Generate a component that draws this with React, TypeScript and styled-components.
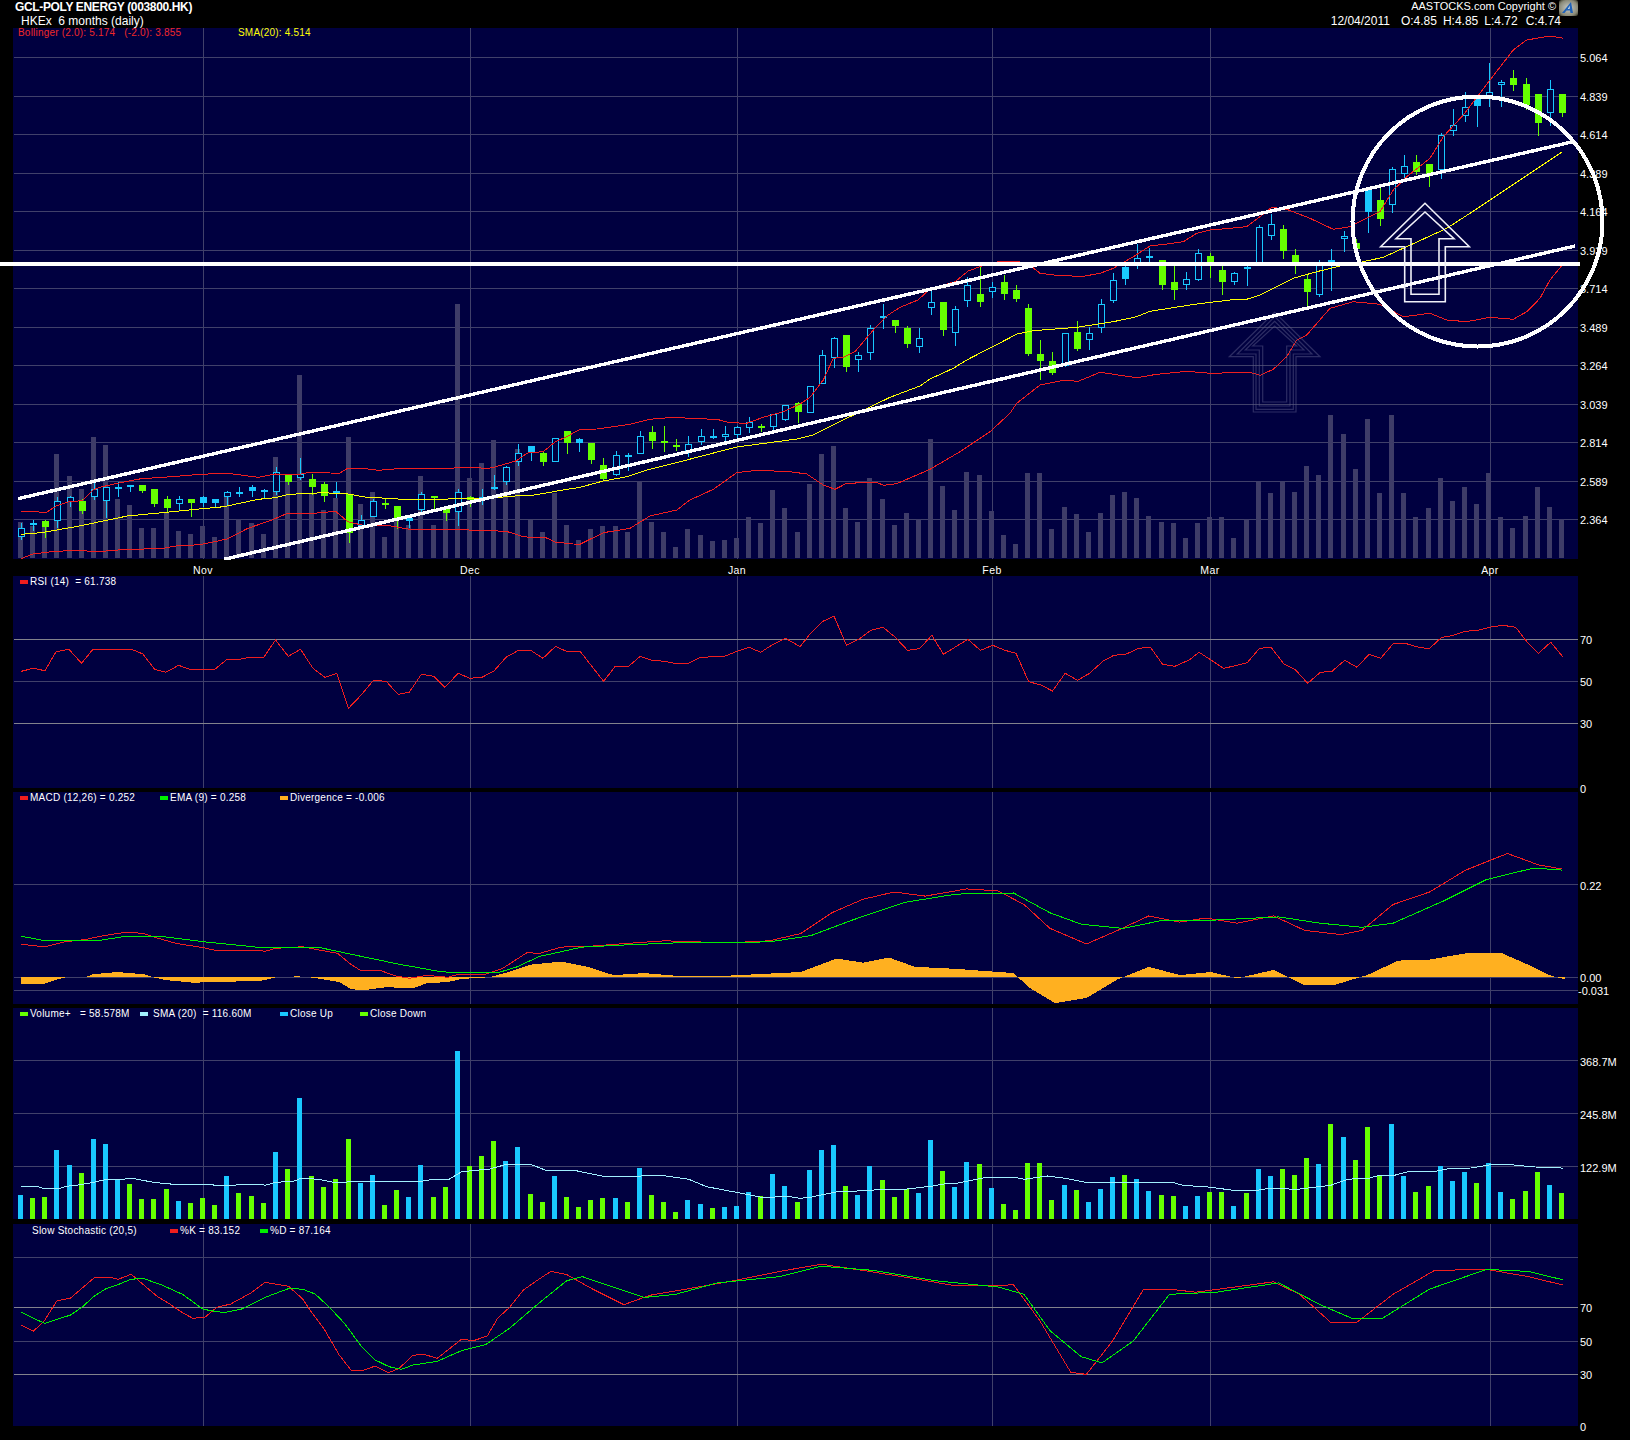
import React from "react";
import styled, { createGlobalStyle } from "styled-components";

const NAVY = "#000040";
const GRID = "#40406a";
const LIGHT = "#82828c";
const BLUE = "#19c8ff";
const GREEN = "#66ff00";
const RED = "#f01e1e";
const LIME = "#00f000";
const ORANGE = "#ffb020";
const YELLOW = "#ffff00";
const CYAN = "#a0f0ff";

// every value below was read off the chart in page pixels, from crops of different scale
const seg = (x0: number, y0: number, sx: number, sy: number, pts: string) =>
  pts.split(" ").map((p) => {
    const [x, y] = p.split(",").map(Number);
    return [x0 + x / sx, y0 + y / sy];
  });
const FULL = 1 / 1.0396;
const join = (...parts: number[][][]) =>
  parts.flat().map(([x, y]) => `${x.toFixed(1)},${y.toFixed(1)}`).join(" ");

const upperBand = join(
  seg(0, 400, 2.904, 3, "62,334 135,337 165,317 200,305 240,302 270,270 290,262 340,250 410,236 500,230 580,223 660,220 750,232 800,222 860,225 900,217 985,220 1010,205 1060,206 1100,211 1170,205 1310,205 1340,202 1420,205 1440,200 1500,182 1530,160"),
  seg(530, 300, 3, 3, "0,458 40,455 76,425 110,410 150,388 200,387 250,380 300,373 360,358 430,352 500,356 560,358 600,368 650,370 700,352 760,335 810,312 840,292 880,240 910,175 940,172 975,155 1030,90 1075,45 1110,22"),
  seg(900, 200, 3, 3, "54,300 90,267 165,245 205,213 245,198 300,184 355,184 395,200 420,220 480,227 550,229 600,220 640,205 700,170 750,138 800,132 850,125 890,100 930,90"),
  seg(1230, 0, 3, 3, "0,685 50,680 90,650 125,622 170,628 240,655 310,688 360,680 410,655 450,635 490,570 530,530 600,475 640,410 700,345 780,240 850,150 890,120 960,108 1000,115")
);
const lowerBand = join(
  seg(0, 400, 2.904, 3, "62,476 95,462 160,454 240,451 270,456 370,448 470,446 510,438 580,434 660,417 720,385 790,360 835,340 890,342 975,334 1010,365 1050,375 1130,377 1190,388 1300,388 1420,392 1470,394 1520,410"),
  seg(530, 300, 3, 3, "0,712 45,712 75,726 130,732 150,733 220,698 300,685 360,648 440,630 480,600 550,568 620,518 680,511 780,515 830,522 880,555 915,568 950,550 1040,547 1060,556 1100,551 1200,508 1290,455 1380,395 1440,340"),
  seg(900, 200, 3, 3, "350,610 420,555 490,541 535,544 600,517 710,533 770,523 860,514 930,520 1050,517 1080,526 1120,508 1160,470 1190,420 1220,405 1290,325 1360,305 1440,313"),
  seg(1230, 0, 3, 3, "520,950 600,940 650,960 710,965 780,952 850,958 890,935 930,895 960,840 997,795")
);
const sma = join(
  seg(0, 400, 2.904, 3, "62,403 120,398 165,390 230,378 300,363 370,348 470,338 570,328 650,320 750,298 800,293 840,283 940,278 1010,282 1060,291 1170,298 1300,297 1400,296 1450,292 1530,285"),
  seg(530, 300, 3, 3, "0,587 100,570 150,562 220,543 290,530 350,510 470,480 620,441 800,417 850,405 960,350 1080,292 1170,258 1200,237 1270,205 1310,180 1440,113"),
  seg(900, 200, 3, 3, "350,402 400,392 530,382 640,365 710,350 750,334 890,312"),
  seg(1230, 0, 3, 3, "0,900 50,898 90,885 190,835 260,815 330,798 400,785 460,772 530,740 650,685 720,640 780,600 900,520 960,480 997,455")
);
const rsi = join(
  seg(0, 590, 1.96, 3, "42,244 65,235 88,242 110,185 135,178 160,220 182,178 258,178 280,192 303,238 325,247 350,226 372,238 421,238 445,208 470,208 490,202 517,202 540,150 565,199 589,178 614,236 637,262 660,250 683,355 708,315 732,271 757,274 780,313 802,307 826,253 850,259 872,292 898,250 921,265 945,262 968,243 992,202 1016,181 1040,181 1064,205 1089,169 1110,184 1137,184 1183,274 1206,229 1232,229 1255,199 1278,211 1302,214 1323,220 1350,220 1373,202 1420,199 1445,184 1468,172 1491,187 1515,163 1540,145"),
  seg(800, 590, 1.889, 3, "0,170 20,130 42,95 64,78 88,166 111,148 134,121 157,112 180,142 203,181 226,176 249,136 271,193 317,148 341,181 364,166 387,181 408,190 432,275 455,285 477,303 501,250 524,271 547,250 572,214 593,196 615,193 640,175 662,172 685,223 708,229 735,210 754,187 800,235 820,228 845,218 868,175 890,172 914,222 935,238 959,280 983,247 1005,244 1029,211 1052,232 1075,193 1097,205 1120,162 1143,160 1165,170 1188,177 1212,142 1232,137 1256,124 1280,121 1306,111 1328,106 1352,112 1372,153 1395,190 1418,157 1441,200")
);
const macd = join(
  seg(0, 780, 2.904, 3, "62,493 115,499 135,499 190,485 245,479 300,467 365,457 415,460 450,472 510,490 590,503 625,511 750,511 770,514 800,505 880,500 915,508 980,520 1015,550 1045,570 1100,570 1150,588 1190,595 1240,586 1300,592 1330,583 1410,583 1460,565 1530,518"),
  seg(0, 0, FULL, FULL, "519,917 540,911 570,910 610,907 640,905 700,907 740,905 770,898 800,878 830,865 860,858 890,862 930,855 960,857 985,870 1010,893 1045,908 1075,895 1105,881 1135,887 1160,883 1190,888 1225,881 1255,895 1290,899 1310,895 1340,870 1375,858 1410,837 1450,821 1480,832 1503,836")
);
const ema = join(
  seg(0, 780, 2.904, 3, "62,469 125,481 290,481 365,469 465,469 590,485 750,502 925,502 1040,527 1160,553 1280,575 1310,577 1450,577 1500,561"),
  seg(0, 0, FULL, FULL, "519,920 560,911 600,909 650,907 740,906 780,900 820,885 870,868 920,860 975,859 1010,878 1040,889 1080,893 1120,885 1170,885 1230,882 1270,888 1310,892 1340,888 1390,866 1430,846 1475,835 1503,837")
);
const divergence = join(
  [[21, 977]],
  seg(0, 780, 2.904, 3, "62,611 128,611 160,600 190,592 200,590 212,590 213,592 245,592 270,583 340,576 420,583 445,592 480,600 560,608 640,606 760,602 800,592 868,589 880,592 900,592 950,600 985,606 1020,628 1060,630 1120,622 1200,624 1240,610 1300,606 1340,597 1400,593 1420,592 1470,578"),
  seg(0, 0, FULL, FULL, "510,928 540,925 565,930 590,938 620,936 650,938.5 700,938.5 770,935 805,922 830,926 855,921 880,930 920,932 975,936 990,950 1015,965 1045,960 1075,942 1105,930 1135,938 1165,935 1190,941 1225,933 1255,948 1285,947 1315,938 1345,924 1375,923 1410,917 1445,917 1470,928 1490,938 1505,942"),
  [[1565, 977]]
);
const volumeSma = join(
  seg(0, 1040, 1.96, 3, "41,439 72,439 85,445 118,445 130,439 150,436 180,428 210,418 240,418 260,415 300,427 340,433 415,433 420,436 460,436 470,433 510,433 520,436 540,427 575,424 590,415 625,418 650,426 680,426 700,424 825,424 850,418 880,418 905,395 960,387 990,374 1040,373 1070,391 1125,391 1180,408 1250,411 1260,406 1295,406 1350,418 1385,440 1440,456 1500,474 1520,471 1540,468"),
  seg(800, 1040, 1.96, 3, "0,475 20,472 70,456 140,451 160,447 210,447 260,438 285,431 310,429 365,412 420,412 440,418 485,408 520,415 560,427 730,427 750,436 800,441 860,453 900,450 920,445 975,448 1040,436 1070,420 1090,415 1115,415 1135,406 1165,406 1195,394 1245,394 1275,385 1315,384 1350,375 1385,373 1440,381 1480,382 1495,385")
);
const stochK = join(
  seg(0, 1200, 2.904, 3, "62,376 97,394 130,360 165,303 205,294 275,232 320,232 343,238 381,223 455,288 490,310 530,338 560,355 595,352 630,322 670,312 730,278 770,247 838,259 880,298 900,330 940,385 985,465 1020,511 1056,511 1090,498 1128,518 1160,505 1198,466 1230,463 1270,475 1340,418 1375,422 1415,408 1445,355 1480,322 1520,270"),
  seg(0, 0, FULL, FULL, "519,1230 530,1223 545,1226 570,1240 600,1255 625,1246 660,1240 700,1233 750,1223 790,1216 830,1222 880,1230 920,1237 975,1236 1000,1270 1030,1320 1045,1322 1070,1290 1100,1240 1125,1240 1150,1243 1195,1237 1225,1233 1250,1245 1280,1272 1305,1272 1340,1245 1380,1222 1430,1221 1470,1228 1503,1236")
);
const stochD = join(
  seg(0, 1200, 2.904, 3, "62,337 97,355 130,370 205,345 240,320 275,287 310,265 345,253 380,238 415,235 470,255 530,283 590,328 650,338 700,328 775,290 840,265 880,268 915,282 955,320 1000,370 1050,440 1090,480 1130,500 1165,508 1200,495 1270,484 1340,452 1410,434 1480,385"),
  seg(0, 0, FULL, FULL, "519,1253 545,1232 560,1228 590,1238 620,1248 650,1245 690,1234 750,1228 790,1218 840,1222 900,1232 960,1238 985,1245 1010,1280 1040,1305 1060,1311 1090,1290 1125,1245 1170,1243 1230,1234 1270,1255 1300,1268 1330,1268 1375,1240 1430,1221 1470,1223 1503,1231")
);

type Kind = "h" | "u" | "d";
type Candle = [Kind, number, number, number, number];

const candleRows = (base: number, rows: string): Candle[] =>
  rows.split(" ").map((r) => {
    const [k, hi, top, bot, lo] = r.split(",");
    return [k as Kind, base + +hi / 3, base + +top / 3, base + +bot / 3, base + +lo / 3];
  });

const candles: Candle[] = [
  ...candleRows(400, "h,370,385,413,420 u,360,370,374,394 d,360,363,381,413 h,292,304,365,385 h,288,292,306,321 d,297,304,333,342 h,250,268,293,300 h,260,262,305,352 h,247,262,268,291 u,256,256,259,278 d,255,255,273,279 d,267,267,312,321 d,288,297,324,336 h,288,298,314,330 d,297,297,309,351 u,288,291,309,321 u,297,297,309,321 h,273,277,293,316 u,261,276,278,291 u,255,261,273,291 u,267,270,272,298 h,201,217,276,285 d,222,222,246,255 h,174,222,234,240 d,222,237,261,285 d,246,252,288,306 u,246,273,276,294 d,282,282,399,430 h,345,360,378,382 h,297,303,351,351 d,294,310,312,327 d,318,318,354,387 u,354,354,362,384 h,276,282,330,336 d,289,289,291,330 d,322,325,339,363 h,267,276,335,378 d,288,292,300,321 u,267,291,293,315 u,225,262,264,270 h,198,202,248,255 h,132,160,188,198 u,139,139,159,183"),
  ...candleRows(300, "d,455,460,486,498 h,415,415,488,488 d,393,393,429,462 u,414,417,429,456 d,429,429,480,492 d,474,495,537,540 h,453,466,525,528 u,459,465,467,513 h,393,408,462,462 d,378,396,423,447 d,378,423,429,456 d,417,435,437,453 h,408,433,456,471 h,387,409,426,435 u,387,409,411,417 h,378,403,411,423 h,378,382,405,420 h,351,367,384,399 d,372,378,380,396 h,343,343,381,393 h,316,316,360,363 d,306,309,336,369 h,258,258,339,339 h,150,166,252,252 h,111,114,174,204 d,105,105,201,216 h,156,166,180,216 h,75,84,158,180 u,12,48,50,87 d,60,60,78,99"),
  ...candleRows(200, "d,378,384,432,444 h,384,415,443,459 h,270,307,326,345 d,306,306,390,408 h,319,328,401,438 h,232,256,305,321 d,198,282,306,321 h,247,262,278,294 d,225,247,282,300 d,255,270,297,306 d,312,324,462,468 d,420,462,483,540 d,456,483,519,525 h,400,400,498,502 d,363,396,447,453 h,381,400,422,450 h,297,313,385,399 h,219,241,305,309 u,183,202,237,255 h,132,175,196,207 h,144,169,175,190 d,180,180,255,270 d,195,246,270,300 h,216,238,257,270 h,148,160,240,243 d,159,168,190,234 d,198,210,246,285 h,216,220,248,255 u,190,202,204,258"),
  ...candleRows(0, "h,676,682,790,790 h,642,673,710,720 d,675,687,753,777 d,747,765,787,822 d,825,837,876,921 h,780,790,885,890 u,747,780,790,873 h,693,709,719,756 d,717,729,747,750 u,567,567,635,699 d,564,600,657,678 h,501,508,616,639 h,465,499,523,540 d,465,486,516,525 d,492,492,525,561 h,400,406,510,537 h,327,376,394,408 h,276,322,349,366 u,295,295,318,381 h,189,277,295,321 h,241,247,256,321 d,210,234,255,273 d,234,252,315,330 d,282,282,369,408 h,240,268,341,378 d,282,282,339,351"),
];

// bar tops at 3x, measured from y=1040; u = close up, d = close down
const volumes = "u465 d474 d471 u330 u375 d399 u297 u312 u420 d432 d477 d477 d447 u483 d489 d474 d495 u408 d459 d468 d489 u336 d387 u174 d408 d441 d417 d297 u429 u405 d495 d450 u471 u375 d471 d441 u33 d378 d348 d303 u363 u321 d462 d486 u408 d471 d501 d480 d474 u474 d486 u384 d465 d486 d516 u480 u492 d504 u501 u498 u456 d468 u402 u438 d486 u390 u330 u315 d438 u465 u378 d420 d471 d447 u459 u300 d393 u441 u366 d372 u444 d492 d510 d369 d369 d480 u435 d450 u486 u447 u411 d405 u417 u453 d465 d468 u498 u468 d456 d456 u498 d459 u387 u408 d387 d405 d354 u372 d252 u291 d360 d261 d408 u252 u408 d456 d438 u378 u423 u396 d429 u369 u456 d477 d453 d396 u435 d459"
  .split(" ")
  .map((v) => ({ up: v[0] === "u", h: (537 - Number(v.slice(1))) / 3 }));

const barX = (i: number) => Math.round(18 + 12.134 * i);
const wickX = (i: number) => Math.round(21 + 12.134 * i);
const MONTHS: [string, number][] = [["Nov", 203], ["Dec", 470], ["Jan", 737], ["Feb", 992], ["Mar", 1210], ["Apr", 1490]];

const GlobalStyle = createGlobalStyle`
  html, body { margin: 0; padding: 0; background: #000; }
  body { overflow: hidden; }
`;

const Page = styled.div`
  position: relative;
  width: 1630px;
  height: 1440px;
  background: #000;
  color: #fff;
  font-family: "Liberation Sans", Arial, sans-serif;
  overflow: hidden;
`;

const Header = styled.header`
  display: flex;
  justify-content: space-between;
  width: 1578px;
  height: 28px;
  padding-left: 15px;
  box-sizing: border-box;
`;

const TitleBlock = styled.div`
  display: flex;
  flex-direction: column;
`;

const Title = styled.div`
  font-size: 12px;
  font-weight: bold;
  line-height: 14px;
  letter-spacing: -0.35px;
`;

const SubTitle = styled.div`
  font-size: 12px;
  line-height: 14px;
  padding-left: 6px;
  white-space: pre;
`;

const QuoteBlock = styled.div`
  display: flex;
  flex-direction: column;
  align-items: flex-end;
`;

const Brand = styled.div`
  display: flex;
  align-items: flex-start;
  gap: 3px;
  height: 14px;
  font-size: 11px;
  line-height: 12px;
`;

const Quote = styled.div`
  display: flex;
  gap: 6px;
  padding-right: 17px;
  font-size: 12px;
  line-height: 14px;
`;

const QuoteDate = styled.span`
  margin-right: 5px;
`;

const LastQuote = styled.span`
  margin-left: 2px;
`;

const Panels = styled.div`
  display: flex;
  flex-direction: column;
  margin-left: 13px;
`;

const Panel = styled.section<{ $h: number; $gap?: number }>`
  display: grid;
  grid-template-columns: 1565px 52px;
  height: ${(p) => p.$h}px;
  margin-bottom: ${(p) => p.$gap ?? 0}px;
`;

const PlotFill = styled.div`
  grid-area: 1 / 1 / 2 / 2;
  background: ${NAVY};
`;

const ChartSvg = styled.svg`
  grid-area: 1 / 1 / 2 / 3;
  display: block;
  width: 1617px;
  height: 100%;
  overflow: visible;
  font-family: "Liberation Sans", Arial, sans-serif;
`;

const Legend = styled.div<{ $left?: number; $top?: number; $ls?: number }>`
  grid-area: 1 / 1 / 2 / 2;
  align-self: start;
  display: flex;
  padding: ${(p) => p.$top ?? 0}px 0 0 ${(p) => p.$left ?? 7}px;
  font-size: 10px;
  line-height: 10px;
  letter-spacing: ${(p) => p.$ls ?? 0.24}px;
  white-space: pre;
`;

const LegendItem = styled.div<{ $w?: number; $pad?: number; $c?: string }>`
  display: flex;
  align-items: center;
  gap: 2px;
  width: ${(p) => (p.$w ? `${p.$w}px` : "auto")};
  padding-left: ${(p) => p.$pad ?? 0}px;
  box-sizing: border-box;
  color: ${(p) => p.$c ?? "#fff"};
`;

const Swatch = styled.i<{ $c: string }>`
  display: block;
  width: 8px;
  height: 4px;
  background: ${(p) => p.$c};
`;

const MonthStrip = styled.svg`
  display: block;
  width: 1565px;
  height: 17px;
`;

const Overlay = styled.svg`
  position: absolute;
  left: 0;
  top: 0;
  width: 1630px;
  height: 560px;
  pointer-events: none;
`;

type Line = [number, string?];

const GridLines = ({ top, h, lines }: { top: number; h: number; lines: Line[] }) => (
  <g shapeRendering="crispEdges">
    {MONTHS.map(([m, x]) => (
      <rect key={m} x={x} y={top} width={1} height={h} fill={GRID} />
    ))}
    {lines.map(([y, c]) => (
      <rect key={y} x={14} y={y} width={1564} height={1} fill={c ?? GRID} />
    ))}
  </g>
);

const AxisLabels = ({ ticks }: { ticks: [string, number][] }) => (
  <g fill="#fff" fontSize={11}>
    {ticks.map(([t, y]) => (
      <text key={t} x={t.startsWith("-") ? 1578 : 1580} y={y + 5}>
        {t}
      </text>
    ))}
  </g>
);

const Trace = ({ points, color }: { points: string; color: string }) => (
  <polyline points={points} fill="none" stroke={color} strokeWidth={1} shapeRendering="crispEdges" />
);

const Chart = ({ top, h, children }: { top: number; h: number; children: React.ReactNode }) => (
  <ChartSvg viewBox={`13 ${top} 1617 ${h}`}>{children}</ChartSvg>
);

const CandleBars = () => (
  <g shapeRendering="crispEdges">
    {candles.map(([k, hi, bodyTop, bodyBot, lo], i) => {
      const x = wickX(i);
      const color = k === "d" ? GREEN : BLUE;
      const t = Math.round(bodyTop);
      const bh = Math.max(Math.round(bodyBot - bodyTop), 2);
      return (
        <g key={i}>
          <rect x={x} y={Math.round(hi)} width={1} height={Math.round(lo - hi)} fill={color} />
          {k === "h" ? (
            <rect x={x - 2.5} y={t + 0.5} width={6} height={bh - 1} fill={NAVY} stroke={color} strokeWidth={1} />
          ) : (
            <rect x={x - 3} y={t} width={7} height={bh} fill={color} />
          )}
        </g>
      );
    })}
  </g>
);

const arrowPath = (tip: number, wing: number, shaft: number, bottom: number, left: number, right: number) =>
  `${left},${wing} ${shaft},${wing} ${shaft},${bottom} ${2 * tip - shaft},${bottom} ${2 * tip - shaft},${wing} ${right},${wing}`;

const ArrowLine = ({ x0, y0, tip, apex, wing, shaft, bottom, half, color, weight = 1.2 }: {
  x0: number; y0: number; tip: number; apex: number; wing: number; shaft: number; bottom: number; half: number; color: string; weight?: number;
}) => {
  const pts = arrowPath(tip, wing, shaft, bottom, tip - half, tip + half).split(" ");
  const all = [`${tip},${apex}`, ...pts].map((p) => {
    const [x, y] = p.split(",").map(Number);
    return `${(x0 + x / 3).toFixed(1)},${(y0 + y / 3).toFixed(1)}`;
  });
  return <polygon points={all.join(" ")} fill="none" stroke={color} strokeWidth={weight} />;
};

const mainTicks: [string, number][] = [
  ["5.064", 57], ["4.839", 96], ["4.614", 134], ["4.389", 173], ["4.164", 211], ["3.939", 250], ["3.714", 288],
  ["3.489", 327], ["3.264", 365], ["3.039", 404], ["2.814", 442], ["2.589", 481], ["2.364", 519],
];

const App = () => (
  <Page>
    <GlobalStyle />
    <Header>
      <TitleBlock>
        <Title>GCL-POLY ENERGY (003800.HK)</Title>
        <SubTitle>HKEx  6 months (daily)</SubTitle>
      </TitleBlock>
      <QuoteBlock>
        <Brand>
          AASTOCKS.com Copyright ©
          <svg width="19" height="16" viewBox="0 0 19 16">
            <defs>
              <radialGradient id="logoBg" cx="0.5" cy="0.5" r="0.7">
                <stop offset="0" stopColor="#c8ccc8" />
                <stop offset="0.7" stopColor="#8a8a78" />
                <stop offset="1" stopColor="#2c2c1c" />
              </radialGradient>
            </defs>
            <rect width="19" height="16" rx="2" fill="url(#logoBg)" />
            <path d="M3 13 L12 2 L14 13 L11.5 13 L11 10.5 L7.5 10.5 L5.5 13 Z" fill="#1f62b8" />
            <path d="M8.8 9 L10.6 9 L10.9 5.5 Z" fill="#d8e4f0" />
          </svg>
        </Brand>
        <Quote>
          <QuoteDate>12/04/2011</QuoteDate>
          <span>O:4.85</span>
          <span>H:4.85</span>
          <span>L:4.72</span>
          <LastQuote>C:4.74</LastQuote>
        </Quote>
      </QuoteBlock>
    </Header>

    <Panels>
      <Panel $h={531}>
        <PlotFill />
        <Chart top={28} h={531}>
          <GridLines top={28} h={531} lines={mainTicks.map(([, y]) => [y] as Line)} />
          <g shapeRendering="crispEdges">
            {volumes.map((v, i) => {
              const bh = Math.round(v.h * 1.51);
              return <rect key={i} x={barX(i)} y={558 - bh} width={5} height={bh} fill="#3e3c68" />;
            })}
          </g>
          <CandleBars />
          <Trace points={upperBand} color={RED} />
          <Trace points={lowerBand} color={RED} />
          <Trace points={sma} color={YELLOW} />
          <AxisLabels ticks={mainTicks} />
        </Chart>
        <Legend $left={5} $ls={0.2}>
          <LegendItem $w={220} $c="#f02828">Bollinger (2.0): 5.174   (-2.0): 3.855</LegendItem>
          <LegendItem $c={YELLOW}>SMA(20): 4.514</LegendItem>
        </Legend>
      </Panel>

      <MonthStrip viewBox="13 559 1565 17">
        <g fill="#fff" fontSize={10.5} letterSpacing={0.4} textAnchor="middle" fontFamily='"Liberation Sans", Arial, sans-serif'>
          {MONTHS.map(([m, x]) => (
            <text key={m} x={x} y={574}>{m}</text>
          ))}
        </g>
      </MonthStrip>

      <Panel $h={212} $gap={4}>
        <PlotFill />
        <Chart top={576} h={212}>
          <GridLines top={576} h={212} lines={[[639, LIGHT], [681], [723, LIGHT]]} />
          <Trace points={rsi} color={RED} />
          <AxisLabels ticks={[["70", 639], ["50", 681], ["30", 723], ["0", 788]]} />
        </Chart>
        <Legend $top={1}>
          <LegendItem><Swatch $c={RED} />RSI (14)  = 61.738</LegendItem>
        </Legend>
      </Panel>

      <Panel $h={212} $gap={4}>
        <PlotFill />
        <Chart top={792} h={212}>
          <GridLines top={792} h={212} lines={[[884], [977], [990]]} />
          <polygon points={divergence} fill={ORANGE} shapeRendering="crispEdges" />
          <Trace points={macd} color={RED} />
          <Trace points={ema} color={LIME} />
          <AxisLabels ticks={[["0.22", 885], ["0.00", 977], ["-0.031", 990]]} />
        </Chart>
        <Legend $top={1}>
          <LegendItem $w={140}><Swatch $c={RED} />MACD (12,26) = 0.252</LegendItem>
          <LegendItem $w={120}><Swatch $c={LIME} />EMA (9) = 0.258</LegendItem>
          <LegendItem><Swatch $c={ORANGE} />Divergence = -0.006</LegendItem>
        </Legend>
      </Panel>

      <Panel $h={211} $gap={5}>
        <PlotFill />
        <Chart top={1008} h={211}>
          <GridLines top={1008} h={211} lines={[[1060], [1113], [1166]]} />
          <g shapeRendering="crispEdges">
            {volumes.map((v, i) => {
              const bh = Math.round(v.h);
              return <rect key={i} x={barX(i)} y={1219 - bh} width={5} height={bh} fill={v.up ? BLUE : GREEN} />;
            })}
          </g>
          <Trace points={volumeSma} color={CYAN} />
          <AxisLabels ticks={[["368.7M", 1061], ["245.8M", 1114], ["122.9M", 1167]]} />
        </Chart>
        <Legend $top={1}>
          <LegendItem $w={120}><Swatch $c={GREEN} />Volume+   = 58.578M</LegendItem>
          <LegendItem $w={140}><Swatch $c={CYAN} /> SMA (20)  = 116.60M</LegendItem>
          <LegendItem $w={80}><Swatch $c={BLUE} />Close Up</LegendItem>
          <LegendItem><Swatch $c={GREEN} />Close Down</LegendItem>
        </Legend>
      </Panel>

      <Panel $h={202}>
        <PlotFill />
        <Chart top={1224} h={202}>
          <GridLines top={1224} h={202} lines={[[1257], [1307, LIGHT], [1341], [1374, LIGHT]]} />
          <Trace points={stochK} color={RED} />
          <Trace points={stochD} color={LIME} />
          <AxisLabels ticks={[["70", 1307], ["50", 1341], ["30", 1374], ["0", 1426]]} />
        </Chart>
        <Legend $top={2}>
          <LegendItem $w={150} $pad={12}>Slow Stochastic (20,5)</LegendItem>
          <LegendItem $w={90}><Swatch $c={RED} />%K = 83.152</LegendItem>
          <LegendItem><Swatch $c={LIME} />%D = 87.164</LegendItem>
        </Legend>
      </Panel>
    </Panels>

    <Overlay viewBox="0 0 1630 560">
      <g opacity={0.5}>
        <ArrowLine x0={900} y0={200} tip={1124} apex={337} wing={470} shaft={1060} bottom={636} half={136} color="#5a5a88" />
        <ArrowLine x0={900} y0={200} tip={1124} apex={350} wing={462} shaft={1068} bottom={628} half={112} color="#5a5a88" />
        <ArrowLine x0={900} y0={200} tip={1124} apex={364} wing={450} shaft={1078} bottom={618} half={88} color="#5a5a88" />
        <ArrowLine x0={900} y0={200} tip={1124} apex={378} wing={438} shaft={1088} bottom={606} half={66} color="#5a5a88" />
      </g>
      <g shapeRendering="crispEdges" fill="none" stroke="#fff">
        <line x1={0} y1={264} x2={1580} y2={264} strokeWidth={4} />
        <line x1={18} y1={498.7} x2={1573} y2={141.7} strokeWidth={3.4} />
        <line x1={224} y1={559.3} x2={1575} y2={246} strokeWidth={3.4} />
        <ellipse cx={1477.5} cy={221.5} rx={125} ry={125} strokeWidth={4} />
      </g>
      <ArrowLine x0={1230} y0={0} tip={585} apex={610} wing={740} shaft={524} bottom={905} half={133} color="#f0f0f8" weight={1.6} />
      <ArrowLine x0={1230} y0={0} tip={585} apex={636} wing={716} shaft={543} bottom={883} half={87} color="#f0f0f8" weight={1.6} />
    </Overlay>
  </Page>
);

export default App;
